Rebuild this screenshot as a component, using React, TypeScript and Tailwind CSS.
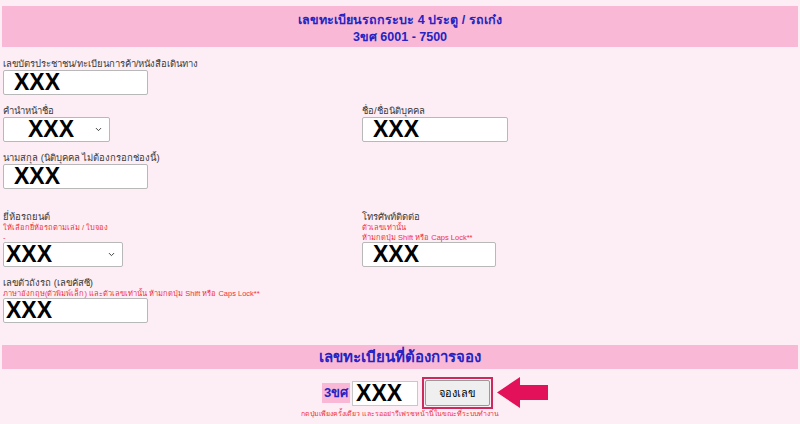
import { ChevronDown } from "lucide-react";

const font = { fontFamily: '"Liberation Sans", "Noto Sans", Tahoma, sans-serif' };

function Field({ w, pad = "pl-[10px]" }: { w: string; pad?: string }) {
	return (
		<div className={`${w} h-[25px] bg-white border border-[#b8b8b8] rounded-[2px] flex items-center ${pad}`}>
			<span className="text-[23px] font-bold leading-none text-black">XXX</span>
		</div>
	);
}

function Select({ w, pad }: { w: string; pad: string }) {
	return (
		<div className={`${w} h-[25px] bg-white border border-[#b8b8b8] rounded-[2px] flex items-center ${pad} pr-[6px]`}>
			<span className="text-[23px] font-bold leading-none text-black flex-1">XXX</span>
			<ChevronDown className="w-[9px] h-[9px] text-[#333]" strokeWidth={2.5} />
		</div>
	);
}

function Label({ children }: { children: React.ReactNode }) {
	return <div className="h-[12px] text-[9.5px] leading-[12px] text-[#3a3a3a] whitespace-nowrap">{children}</div>;
}

function Note({ children }: { children: React.ReactNode }) {
	return <div className="h-[10px] text-[7.5px] leading-[10px] text-[#f0303c] whitespace-nowrap">{children}</div>;
}

export default function App() {
	return (
		<div className="w-[800px] h-[424px] bg-[#fdeef6] overflow-hidden pt-[6px]" style={font}>
			<div className="mx-[2px] h-[41px] pt-[4px] bg-[#f9b8d6] flex flex-col items-center justify-center text-[#2424c4] font-bold text-[12.5px] leading-[17px]">
				<div className="h-[17px]">เลขทะเบียนรถกระบะ 4 ประตู / รถเก๋ง</div>
				<div className="h-[17px]">3ขศ 6001 - 7500</div>
			</div>

			<div className="px-[3px] pt-[11px] grid grid-cols-[359px_1fr]">
				<div className="col-span-2">
					<Label>เลขบัตรประชาชน/ทะเบียนการค้า/หนังสือเดินทาง</Label>
					<Field w="w-[145px]" />
				</div>

				<div className="mt-[10px]">
					<Label>คำนำหน้าชื่อ</Label>
					<Select w="w-[107px]" pad="pl-[24px]" />
				</div>
				<div className="mt-[10px]">
					<Label>ชื่อ/ชื่อนิติบุคคล</Label>
					<Field w="w-[146px]" />
				</div>

				<div className="col-span-2 mt-[10px]">
					<Label>นามสกุล (นิติบุคคล ไม่ต้องกรอกช่องนี้)</Label>
					<Field w="w-[145px]" />
				</div>

				<div className="mt-[22px]">
					<Label>ยี่ห้อรถยนต์</Label>
					<Note>ให้เลือกยี่ห้อรถตามเล่ม / ใบจอง</Note>
					<Note>-</Note>
					<div className="mt-[-1px]"><Select w="w-[120px]" pad="pl-[2px]" /></div>
				</div>
				<div className="mt-[22px]">
					<Label>โทรศัพท์ติดต่อ</Label>
					<Note>ตัวเลขเท่านั้น</Note>
					<Note>ห้ามกดปุ่ม Shift หรือ Caps Lock**</Note>
					<div className="mt-[-1px]"><Field w="w-[134px]" /></div>
				</div>

				<div className="col-span-2 mt-[10px]">
					<Label>เลขตัวถังรถ (เลขคัสซี)</Label>
					<Note>ภาษาอังกฤษ(ตัวพิมพ์เล็ก) และตัวเลขเท่านั้น ห้ามกดปุ่ม Shift หรือ Caps Lock**</Note>
					<div className="mt-[-1px]"><Field w="w-[145px]" pad="pl-[2px]" /></div>
				</div>
			</div>

			<div className="mx-[2px] mt-[22px] h-[24px] bg-[#f9b8d6] flex items-center justify-center text-[#2424c4] font-bold text-[15px]">
				เลขทะเบียนที่ต้องการจอง
			</div>

			<div className="flex flex-col items-center mt-[8px]">
				<div className="relative flex items-center gap-[2px] ml-[15px]">
					<div className="h-[20px] px-[2px] bg-[#f9b8d6] text-[#2424c4] font-bold text-[13px] leading-[20px]">3ขศ</div>
					<div className="w-[66px] h-[25px] bg-white border border-[#c8c8c8] flex items-center pl-[3px] mr-[2px]">
						<span className="text-[23px] font-bold leading-none text-black">XXX</span>
					</div>
					<div className="border-2 border-[#cc2a5c] p-[1px]">
						<button className="w-[65px] h-[26px] bg-[#efefef] border border-[#9a9a9a] rounded-[2px] text-[11px] leading-[24px] text-black">จองเลข</button>
					</div>
					<svg width="51" height="31" viewBox="0 0 51 31" className="absolute left-full top-0 ml-[4px]">
						<polygon points="0,15.5 23,0 23,8 51,8 51,23 23,23 23,31" fill="#e3105a" />
					</svg>
				</div>
				<div className="h-[9px] text-[7px] leading-[9px] text-[#f0303c] whitespace-nowrap">กดปุ่มเพียงครั้งเดียว และรออย่ารีเฟรชหน้านี้ในขณะที่ระบบทำงาน</div>
			</div>
		</div>
	);
}
